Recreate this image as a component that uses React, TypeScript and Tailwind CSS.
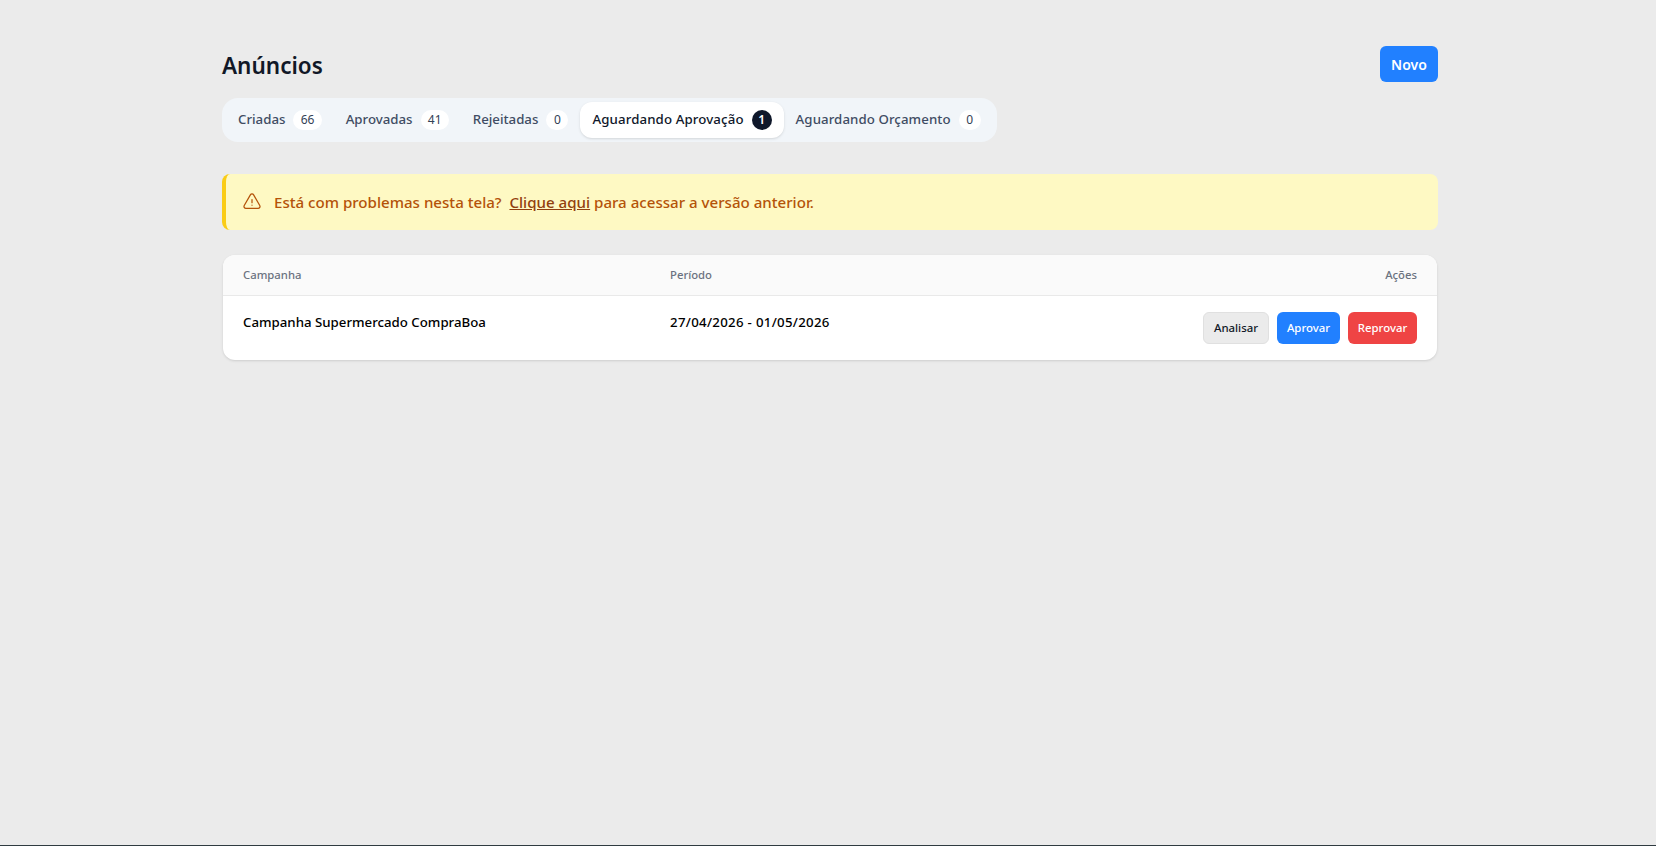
import React from "react";

const tabs = [
  { label: "Criadas", count: "66" },
  { label: "Aprovadas", count: "41" },
  { label: "Rejeitadas", count: "0" },
  { label: "Aguardando Aprovação", count: "1", active: true },
  { label: "Aguardando Orçamento", count: "0", wide: true },
];

function Warn() {
  return (
    <svg width="20" height="20" viewBox="0 0 24 24" fill="none" stroke="#b45309" strokeWidth="1.5" strokeLinecap="round" strokeLinejoin="round" className="shrink-0">
      <path d="M12 9v3.75m-9.303 3.376c-.866 1.5.217 3.374 1.948 3.374h14.71c1.73 0 2.813-1.874 1.948-3.374L13.949 3.378c-.866-1.5-3.032-1.5-3.898 0L2.697 16.126zM12 15.75h.007v.008H12v-.008z" />
    </svg>
  );
}

export default function App() {
  return (
    <div className="h-screen flex flex-col bg-[#ebebeb] overflow-hidden font-['Noto_Sans',sans-serif]">
      <main className="flex-1 pl-[222px] pr-[218px] pt-[46px]">
        <div className="flex items-center justify-between h-[36px]">
          <h1 className="pt-[3px] text-[22.5px] leading-8 font-semibold text-[#111827]">Anúncios</h1>
          <button className="h-[36px] w-[58px] rounded-md bg-[#2180ff] text-white text-[14px] font-semibold">Novo</button>
        </div>
        <div className="mt-4 flex items-center w-fit h-[44px] rounded-2xl bg-[#f1f5f9] p-1">
          {tabs.map((t) => (
            <div key={t.label} className={`flex items-center gap-2 h-9 px-3 rounded-xl text-[13.25px] font-medium ${t.active ? "bg-white text-[#0f172a] shadow-sm tracking-[0.12px]" : "text-[#3f4c63]"} ${t.wide ? "tracking-[0.08px]" : ""}`}>
              <span>{t.label}</span>
              <span className={`flex items-center justify-center h-5 min-w-[22px] px-[7.25px] rounded-full text-[12px] font-normal tracking-normal ${t.active ? "bg-[#0f172a] text-white font-semibold !px-1.5 !min-w-5" : "bg-white text-[#334155]"}`}>{t.count}</span>
            </div>
          ))}
        </div>
        <div className="mt-8 flex items-center gap-[12px] h-[56px] rounded-lg border-l-4 border-[#facc15] bg-[#fef9c3] pl-4 text-[15.1px] font-medium text-[#b45309]">
          <Warn />
          <p>Está com problemas nesta tela?&nbsp; <a className="underline text-[#92400e]">Clique aqui</a> para acessar a versão anterior.</p>
        </div>
        <div className="mt-[25px] mx-px rounded-xl bg-white shadow-sm overflow-hidden">
          <div className="grid grid-cols-[427px_1fr_auto] items-center h-[41px] px-5 pt-px bg-[#fafafa] border-b border-[#e9e9e9] text-[11.3px] text-[#6b7280] font-medium">
            <span>Campanha</span>
            <span>Período</span>
            <span>Ações</span>
          </div>
          <div className="grid grid-cols-[427px_1fr_auto] items-start h-[64px] px-5 pt-4 text-[13.25px] font-medium text-black">
            <span className="leading-5">Campanha Supermercado CompraBoa</span>
            <span className="leading-5 tracking-[0.3px]">27/04/2026 - 01/05/2026</span>
            <div className="flex gap-2 text-[11.4px] font-medium">
              <button className="h-8 w-[66px] rounded-md border border-[#e0e0e0] bg-[#ebebeb] text-[#111827]">Analisar</button>
              <button className="h-8 w-[63px] rounded-md bg-[#2180ff] text-white">Aprovar</button>
              <button className="h-8 w-[69px] rounded-md bg-[#ef4444] text-white">Reprovar</button>
            </div>
          </div>
        </div>
      </main>
      <div className="h-px bg-[#2f3b40]" />
    </div>
  );
}
